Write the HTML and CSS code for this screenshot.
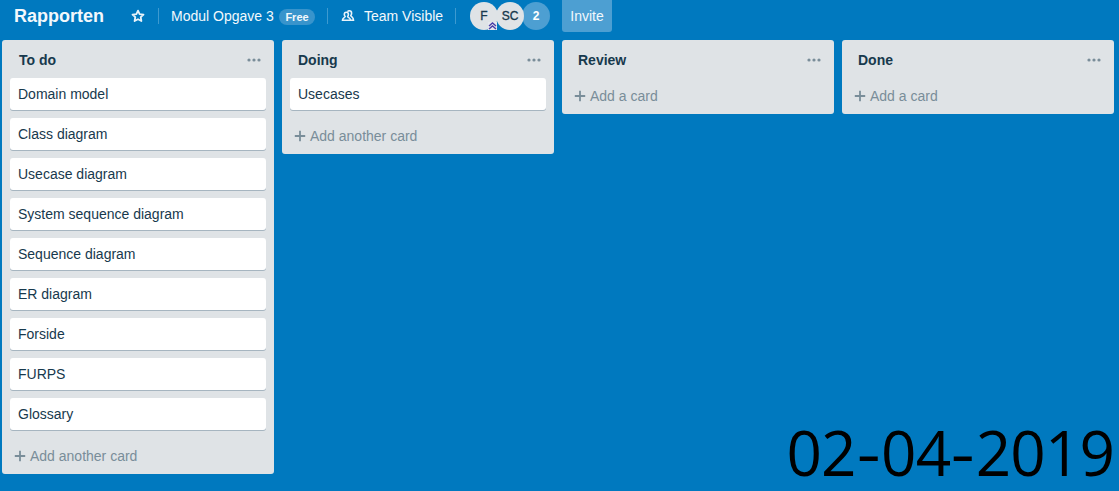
FILE: index.html
```html
<!DOCTYPE html>
<html lang="en">
<head>
<meta charset="utf-8">
<title>Rapporten</title>
<link rel="stylesheet" href="styles.css">
</head>
<body>
<header class="bar">
  <h1 class="board-name">Rapporten</h1>
  <svg class="star" width="14" height="14" viewBox="0 0 14 14"><path d="M7 1.600 8.600 5.100 12.500 5.600 9.700 8.200 10.400 12 7 10.200 3.600 12 4.300 8.200 1.500 5.600 5.400 5.100Z"/></svg>
  <i class="rule"></i>
  <span class="team">Modul Opgave 3</span>
  <span class="plan">Free</span>
  <i class="rule"></i>
  <svg class="people" width="14" height="12" viewBox="0 0 14 12"><path d="M6.500 1.700C7 1 7.600.800 8.300.800c1.500 0 2.300 1.100 2.300 2.500 0 1-.3 1.700-.8 2.300.3 1.200 2.700 1.300 2.700 4.600H10"/><path d="M5.300 2.300c1.400 0 2.100 1 2.100 2.200 0 1-.3 1.500-.8 2 .2 1.300 2.900 1.200 2.900 3.700H1.500c0-2.500 2.500-2.400 2.700-3.700-.5-.5-.9-1-.9-2 0-1.200.7-2.200 2-2.200Z"/></svg>
  <span class="visibility">Team Visible</span>
  <i class="rule"></i>
  <div class="members">
    <span class="avatar">F<svg class="admin" width="9" height="8" viewBox="0 0 9 8"><path d="M1 4 4.500 1 8 4M1 7 4.500 4 8 7"/></svg></span>
    <span class="avatar">SC</span>
    <span class="avatar more">2</span>
  </div>
  <button class="invite">Invite</button>
</header>
<main class="board">
  <section class="list">
    <div class="list-head first"><h2>To do</h2><svg class="dots" width="14" height="4" viewBox="0 0 14 4"><circle cx="2" cy="2" r="1.600"/><circle cx="7" cy="2" r="1.600"/><circle cx="12" cy="2" r="1.600"/></svg></div>
    <div class="cards">
      <div class="card">Domain model</div>
      <div class="card">Class diagram</div>
      <div class="card">Usecase diagram</div>
      <div class="card">System sequence diagram</div>
      <div class="card">Sequence diagram</div>
      <div class="card">ER diagram</div>
      <div class="card">Forside</div>
      <div class="card">FURPS</div>
      <div class="card">Glossary</div>
    </div>
    <div class="add"><svg width="12" height="12" viewBox="0 0 12 12"><path d="M6 .8V11.200M.8 6H11.200"/></svg>Add another card</div>
  </section>
  <section class="list">
    <div class="list-head"><h2>Doing</h2><svg class="dots" width="14" height="4" viewBox="0 0 14 4"><circle cx="2" cy="2" r="1.600"/><circle cx="7" cy="2" r="1.600"/><circle cx="12" cy="2" r="1.600"/></svg></div>
    <div class="cards">
      <div class="card">Usecases</div>
    </div>
    <div class="add"><svg width="12" height="12" viewBox="0 0 12 12"><path d="M6 .8V11.200M.8 6H11.200"/></svg>Add another card</div>
  </section>
  <section class="list">
    <div class="list-head"><h2>Review</h2><svg class="dots" width="14" height="4" viewBox="0 0 14 4"><circle cx="2" cy="2" r="1.600"/><circle cx="7" cy="2" r="1.600"/><circle cx="12" cy="2" r="1.600"/></svg></div>
    <div class="add"><svg width="12" height="12" viewBox="0 0 12 12"><path d="M6 .8V11.200M.8 6H11.200"/></svg>Add a card</div>
  </section>
  <section class="list">
    <div class="list-head"><h2>Done</h2><svg class="dots" width="14" height="4" viewBox="0 0 14 4"><circle cx="2" cy="2" r="1.600"/><circle cx="7" cy="2" r="1.600"/><circle cx="12" cy="2" r="1.600"/></svg></div>
    <div class="add"><svg width="12" height="12" viewBox="0 0 12 12"><path d="M6 .8V11.200M.8 6H11.200"/></svg>Add a card</div>
  </section>
</main>
<div class="date">02<span class="dash">-</span>04<span class="dash">-</span>2019</div>
</body>
</html>
```

FILE: styles.css
```css
* { box-sizing: border-box; }
body {
  margin: 0;
  height: 491px;
  overflow: hidden;
  position: relative;
  background: #0079bf;
  color: #17394d;
  font: 14px/20px "Liberation Sans", Arial, sans-serif;
}
h1, h2 { margin: 0; }

.bar {
  display: flex;
  align-items: center;
  height: 32px;
  padding-left: 14px;
  color: #f2f8fc;
  white-space: nowrap;
}
.board-name { width: 117px; font-size: 18px; line-height: 32px; }
.star { margin-right: 13px; fill: none; stroke: #e8f3fa; stroke-width: 1.8; stroke-linejoin: round; }
.rule { width: 1px; height: 16px; background: #3d9ad0; }
.team { width: 108px; margin-left: 12px; }
.plan {
  width: 36px;
  height: 16px;
  margin: 1px 12px 0 0;
  border-radius: 8px;
  background: #3894cc;
  font-size: 11px;
  font-weight: bold;
  line-height: 16px;
  text-align: center;
}
.people { margin: 0 9px 0 13px; fill: none; stroke: #e8f3fa; stroke-width: 1.6; }
.visibility { width: 91px; }
.members { display: flex; margin-left: 14px; }
.avatar {
  position: relative;
  width: 28px;
  height: 28px;
  margin-right: -2px;
  border-radius: 50%;
  background: #dfe3e6;
  color: #17394d;
  font-size: 12px;
  -webkit-text-stroke: 0.35px currentColor;
  line-height: 28px;
  text-align: center;
}
.avatar.more { margin: 0; background: #4d9fd2; color: #fff; font-weight: bold; -webkit-text-stroke: 0; z-index: -1; }
.admin { position: absolute; left: 18px; top: 20px; z-index: 1; fill: none; stroke: #4a3fa8; stroke-width: 1.4; background: #e6e8ee; }
.invite {
  width: 50px;
  height: 32px;
  margin-left: 12px;
  padding: 0;
  border: 0;
  border-radius: 0 0 3px 3px;
  background: #4d9fd2;
  color: #f2f8fc;
  font: inherit;
}

.board { display: flex; align-items: flex-start; gap: 8px; padding: 8px 2px 0; }
.list { flex: none; width: 272px; border-radius: 3px; background: #dfe3e6; }
.list-head { display: flex; align-items: center; justify-content: space-between; height: 38px; padding: 2px 13px 0 16px; }
.list-head.first { padding-left: 17px; }
h2 { font-size: 14px; line-height: 20px; }
.dots { fill: #798d99; }
.cards { display: flex; flex-direction: column; gap: 8px; padding: 0 8px 8px; }
.card { height: 32px; padding: 6px 8px; border-radius: 3px; background: #fff; box-shadow: 0 1px 0 #a6b5c0; }
.add { display: flex; align-items: center; gap: 4px; height: 36px; padding-left: 12px; color: #798d99; }
.add svg { fill: none; stroke: #798d99; stroke-width: 1.8; }

/* Date stamp laid over the board */
.date {
  position: absolute;
  right: 5px;
  bottom: 0;
  color: #000;
  font: 62px/78px "Open Sans", sans-serif;
  letter-spacing: -0.9px;
  white-space: nowrap;
}
.dash { display: inline-block; width: 25.6px; text-align: center; letter-spacing: 0; transform: scaleX(1.2); }
```
